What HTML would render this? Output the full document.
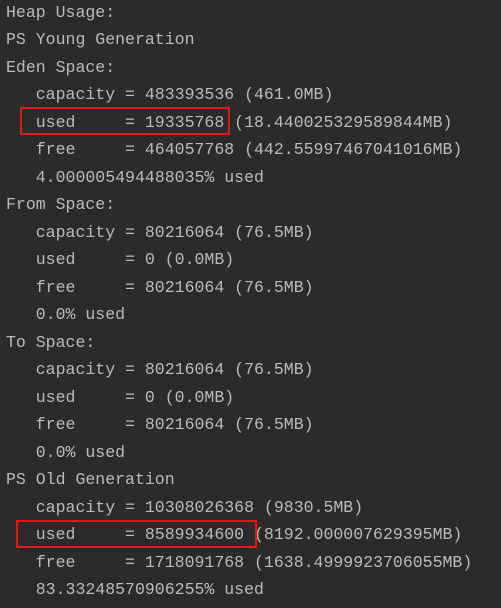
<!DOCTYPE html>
<html><head><meta charset="utf-8"><style>
html,body{margin:0;padding:0;background:#2b2b2b;width:501px;height:608px;overflow:hidden}
pre{margin:0;position:absolute;left:6px;top:-1px;font-family:"Liberation Mono",monospace;font-size:16.55px;line-height:27.48px;color:#bbbbbb}
.box{position:absolute;border:2px solid #e0191b;box-sizing:border-box}
</style></head><body>
<pre>Heap Usage:
PS Young Generation
Eden Space:
   capacity = 483393536 (461.0MB)
   used     = 19335768 (18.440025329589844MB)
   free     = 464057768 (442.55997467041016MB)
   4.000005494488035% used
From Space:
   capacity = 80216064 (76.5MB)
   used     = 0 (0.0MB)
   free     = 80216064 (76.5MB)
   0.0% used
To Space:
   capacity = 80216064 (76.5MB)
   used     = 0 (0.0MB)
   free     = 80216064 (76.5MB)
   0.0% used
PS Old Generation
   capacity = 10308026368 (9830.5MB)
   used     = 8589934600 (8192.000007629395MB)
   free     = 1718091768 (1638.4999923706055MB)
   83.33248570906255% used</pre>
<div class="box" style="left:20px;top:107px;width:210px;height:28px"></div>
<div class="box" style="left:16px;top:520px;width:241px;height:28px"></div>
</body></html>
